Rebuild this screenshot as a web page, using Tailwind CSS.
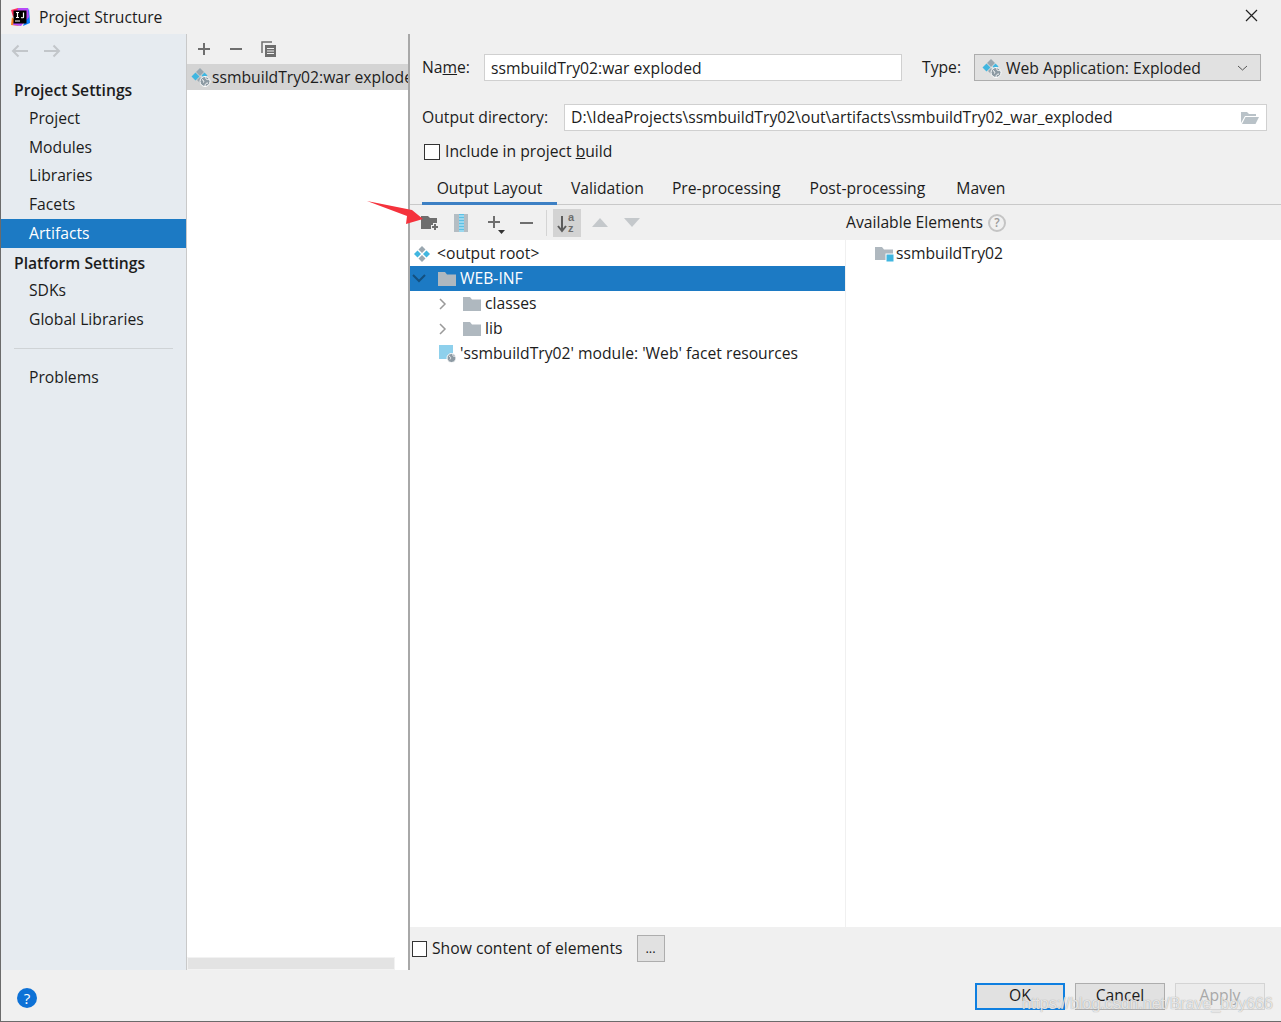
<!DOCTYPE html>
<html lang="en">
<head>
  <meta charset="UTF-8">
  <script src="https://cdn.jsdelivr.net/npm/@tailwindcss/browser@4"></script>
  <title>Project Structure</title>
</head>
<body class="bg-[#f0f0f0] overflow-hidden">
  <!-- Shared icons -->
  <svg class="hidden" xmlns="http://www.w3.org/2000/svg">
    <symbol id="artifact" viewBox="0 0 20 20">
      <path d="M9 1l4 4-4 4-4-4z" fill="#9aa7b0"/>
      <path d="M4.500 5.500l4 4-4 4-4-4z" fill="#40b6e0"/>
      <path d="M13.500 5.500l3 3-3 3-3-3z" fill="#40b6e0"/>
      <path d="M9 10l3 3-3 3-3-3z" fill="#9aa7b0"/>
      <circle cx="14" cy="14.500" r="5" fill="#8d9aa3" stroke="#fff" stroke-width="1"/>
      <path d="M11 12.500c2 1 2 2 1.500 3M15 10c-1 2 1 3 3 2.500M14 19c0-2 1-3 3-3" fill="none" stroke="#fff" stroke-width="1"/>
    </symbol>
    <symbol id="folder" viewBox="0 0 18 14">
      <path d="M0 0h7l2 2.500h9V14H0z" fill="#afb8bf"/>
    </symbol>
  </svg>

  <div class="relative w-[1281px] h-[1022px] flex flex-col border-l border-b border-[#6b6b6b] font-['Open_Sans',sans-serif] text-[15.7px] text-[#1c1c1c]">
    <!-- Title bar -->
    <div class="h-[34px] shrink-0 flex items-center pl-[9px] pr-[23px]">
      <svg class="w-[20px] h-[20px]" viewBox="0 0 20 20">
        <path d="M1 3l7-2 2 3-7 6z" fill="#fe315d"/>
        <path d="M19 1l1 15-7 3z" fill="#087cfa"/>
        <path d="M1 18l1-8 7 9z" fill="#fc801d"/>
        <path d="M8 1h10l1 9-8 9-8-1z" fill="#b74af7"/>
        <rect x="3.500" y="3.500" width="13" height="13" fill="#000"/>
        <rect x="5" y="13.500" width="5" height="1" fill="#fff"/>
        <path d="M6 5.500h3M7.500 5.500v5M6 10.500h3M13.500 5.500v4.500c0 .8-1 1-2.500.5" stroke="#fff" stroke-width="1.200" fill="none"/>
      </svg>
      <span class="ml-[9px] leading-none pt-[2px]">Project Structure</span>
      <svg class="ml-auto w-[13px] h-[13px] mb-[3px]" viewBox="0 0 13 13"><path d="M1 1l11 11M12 1L1 12" stroke="#222" stroke-width="1.200"/></svg>
    </div>

    <!-- Main -->
    <div class="h-[936px] shrink-0 flex">
      <!-- Sidebar -->
      <aside class="w-[186px] shrink-0 bg-[#e6ebf0] border-r border-[#c9c9c9] flex flex-col">
        <div class="h-[42px] shrink-0 flex items-start pt-[10px] pl-[10px] gap-[14px]">
          <svg class="w-[18px] h-[14px]" viewBox="0 0 18 14"><path d="M17 7H2M7.500 1.500L2 7l5.500 5.500" fill="none" stroke="#c2c6ca" stroke-width="2"/></svg>
          <svg class="w-[18px] h-[14px]" viewBox="0 0 18 14"><path d="M1 7h15M10.500 1.500L16 7l-5.500 5.500" fill="none" stroke="#c2c6ca" stroke-width="2"/></svg>
        </div>
        <div class="h-[28.600px] flex items-center pl-[13px] font-semibold">Project Settings</div>
        <div class="h-[28.600px] flex items-center pl-[28px]">Project</div>
        <div class="h-[28.600px] flex items-center pl-[28px]">Modules</div>
        <div class="h-[28.600px] flex items-center pl-[28px]">Libraries</div>
        <div class="h-[28.600px] flex items-center pl-[28px]">Facets</div>
        <div class="h-[28.600px] flex items-center pl-[28px] pt-[2px] bg-[#1c7ac4] text-white">Artifacts</div>
        <div class="h-[28.600px] flex items-center pl-[13px] pt-[4px] font-semibold">Platform Settings</div>
        <div class="h-[28.600px] flex items-center pl-[28px]">SDKs</div>
        <div class="h-[28.600px] flex items-center pl-[28px] pt-[2px]">Global Libraries</div>
        <div class="h-[28.600px] flex items-center px-[13px] pt-[1px]"><div class="w-full h-px bg-[#cfd3d6]"></div></div>
        <div class="h-[28.600px] flex items-center pl-[28px] pt-[4px]">Problems</div>
      </aside>

      <!-- Artifact list -->
      <section class="w-[221px] shrink-0 flex flex-col overflow-hidden">
        <div class="h-[30px] shrink-0 flex items-center pl-[10px] gap-[18px]">
          <svg class="w-[14px] h-[14px]" viewBox="0 0 14 14"><path d="M7 1v12M1 7h12" stroke="#6e6e6e" stroke-width="2"/></svg>
          <svg class="w-[14px] h-[14px]" viewBox="0 0 14 14"><path d="M1 7h12" stroke="#6e6e6e" stroke-width="2"/></svg>
          <svg class="w-[16px] h-[17px]" viewBox="0 0 16 17"><path d="M1 12V1h10" fill="none" stroke="#6e6e6e" stroke-width="1.500"/><rect x="4" y="4" width="11" height="12" fill="#6e6e6e"/><path d="M6 7.500h7M6 10h7M6 12.500h7" stroke="#f0f0f0"/></svg>
        </div>
        <div class="h-[26px] shrink-0 flex items-center bg-[#d4d4d4] pl-[4px] whitespace-nowrap overflow-hidden">
          <svg class="w-[20px] h-[20px] shrink-0"><use href="#artifact"/></svg>
          <span class="ml-[1px] pt-[2px]">ssmbuildTry02:war exploded</span>
        </div>
        <div class="flex-1 bg-white flex flex-col justify-end">
          <div class="h-[13px] w-[208px] bg-[#e3e3e3] border border-[#f2f2f2]"></div>
        </div>
      </section>

      <div class="w-[2px] shrink-0 bg-[#a8a8a8]"></div>

      <!-- Artifact details -->
      <section class="flex-1 flex flex-col min-w-0">
        <div class="h-[141px] shrink-0 flex flex-col pl-[12px]">
          <div class="flex items-center mt-[20px] h-[27px]">
            <span class="w-[62px]">Na<u>m</u>e:</span>
            <div class="w-[418px] h-[27px] bg-white border border-[#d0d0d0] flex items-center pl-[6px] pt-[2px]">ssmbuildTry02:war exploded</div>
            <span class="ml-[20px] w-[52px]">Type:</span>
            <div class="w-[287px] h-[27px] bg-[#e1e1e1] border border-[#adadad] flex items-center pl-[7px] pr-[12px]">
              <svg class="w-[20px] h-[20px] shrink-0"><use href="#artifact"/></svg>
              <span class="ml-[4px] pt-[2px]">Web Application: Exploded</span>
              <svg class="ml-auto w-[11px] h-[6px]" viewBox="0 0 11 6"><path d="M1 1l4.500 4L10 1" fill="none" stroke="#555"/></svg>
            </div>
          </div>
          <div class="flex items-center mt-[23px] h-[27px]">
            <span class="w-[142px]">Output directory:</span>
            <div class="w-[703px] h-[27px] bg-white border border-[#d0d0d0] flex items-center pl-[6px] pr-[7px]">
              <span>D:\IdeaProjects\ssmbuildTry02\out\artifacts\ssmbuildTry02_war_exploded</span>
              <svg class="ml-auto w-[18px] h-[13px]" viewBox="0 0 18 13"><path d="M0 1h6l2 2h7v2H4L0 12z" fill="#b9c2c8"/><path d="M4.500 6H18l-3.500 7H1z" fill="#b9c2c8"/></svg>
            </div>
          </div>
          <div class="flex items-center mt-[9px] ml-[2px]">
            <div class="w-[16px] h-[16px] bg-white border border-[#333]"></div>
            <span class="ml-[5px]">Include in project <u>b</u>uild</span>
          </div>
        </div>

        <!-- Tabs -->
        <div class="h-[30px] shrink-0 flex pl-[12px] border-b border-[#c9c9c9]">
          <div class="relative w-[135px] text-center leading-[26px]">Output Layout<div class="absolute left-0 right-0 bottom-[-1px] h-[3px] bg-[#3d80c4]"></div></div>
          <div class="ml-[14px] leading-[26px]">Validation</div>
          <div class="ml-[28px] leading-[26px]">Pre-processing</div>
          <div class="ml-[29px] leading-[26px]">Post-processing</div>
          <div class="ml-[31px] leading-[26px]">Maven</div>
        </div>

        <!-- Toolbar -->
        <div class="h-[35px] shrink-0 flex items-center">
          <div class="w-[436px] shrink-0 flex items-center pl-[11px]">
            <svg class="w-[18px] h-[16px]" viewBox="0 0 18 16"><path d="M0 1h7l2 2h7v11H0z" fill="#6e6e6e"/><path d="M14 8v8M10 12h8" stroke="#f0f0f0" stroke-width="4"/><path d="M14 9v6M11 12h6" stroke="#6e6e6e" stroke-width="2"/></svg>
            <svg class="ml-[15px] w-[14px] h-[18px]" viewBox="0 0 14 18"><rect x="0" y="0" width="14" height="18" fill="#b4bdc3"/><rect x="5" y="0" width="5" height="18" fill="#5cc1e6"/><path d="M5 2h5M5 5h5M5 8h5M5 11h5M5 14h5M5 17h5" stroke="#d9f0f8" stroke-width="1"/></svg>
            <svg class="ml-[19px] w-[18px] h-[20px] mt-[3px]" viewBox="0 0 18 20"><path d="M7 2v12M1 8h12" stroke="#6e6e6e" stroke-width="2"/><path d="M11 16h7l-3.500 4z" fill="#333"/></svg>
            <svg class="ml-[14px] w-[14px] h-[14px]" viewBox="0 0 14 14"><path d="M1 7h13" stroke="#6e6e6e" stroke-width="2"/></svg>
            <div class="ml-[13px] w-px h-[26px] bg-[#d4d4d4]"></div>
            <div class="ml-[6px] w-[28px] h-[28px] bg-[#d3d3d3] flex items-center justify-center">
              <svg class="w-[20px] h-[22px]" viewBox="0 0 20 22">
                <path d="M5 4v15M1 14l4 5 4-5" fill="none" stroke="#5c5c5c" stroke-width="2"/>
                <text x="11" y="9" font-size="11" font-weight="700" fill="#6e6e6e" font-family="Liberation Sans">a</text>
                <text x="11" y="20" font-size="11" font-weight="700" fill="#6e6e6e" font-family="Liberation Sans">z</text>
              </svg>
            </div>
            <svg class="ml-[11px] w-[16px] h-[9px]" viewBox="0 0 16 9"><path d="M8 0l8 9H0z" fill="#c4c8cb"/></svg>
            <svg class="ml-[16px] w-[16px] h-[9px]" viewBox="0 0 16 9"><path d="M0 0h16L8 9z" fill="#c4c8cb"/></svg>
          </div>
          <span>Available Elements</span>
          <div class="ml-[5px] w-[18px] h-[18px] rounded-full border-2 border-[#c4c4c4] flex items-center justify-center text-[12px] font-semibold text-[#9a9a9a]">?</div>
        </div>

        <!-- Trees -->
        <div class="flex-1 flex bg-white min-h-0">
          <div class="w-[435px] shrink-0 pt-px">
            <div class="h-[25px] flex items-center pl-[3px]">
              <svg class="w-[18px] h-[18px]" viewBox="0 0 18 18"><path d="M9 1l3.500 3.500L9 8 5.500 4.500z" fill="#9aa7b0"/><path d="M4.500 5.500L8 9l-3.500 3.500L1 9z" fill="#40b6e0"/><path d="M13.500 5.500L17 9l-3.500 3.500L10 9z" fill="#40b6e0"/><path d="M9 10l3.500 3.500L9 17l-3.500-3.500z" fill="#9aa7b0"/></svg>
              <span class="ml-[6px]">&lt;output root&gt;</span>
            </div>
            <div class="h-[25px] flex items-center pl-[2px] bg-[#1c7ac4] text-white">
              <svg class="w-[14px] h-[9px]" viewBox="0 0 14 9"><path d="M1 1l6 6 6-6" fill="none" stroke="#14507f" stroke-width="2"/></svg>
              <svg class="ml-[12px] w-[18px] h-[14px]"><use href="#folder"/></svg>
              <span class="ml-[4px]">WEB-INF</span>
            </div>
            <div class="h-[25px] flex items-center pl-[29px]">
              <svg class="w-[8px] h-[12px]" viewBox="0 0 8 12"><path d="M1 1l5 5-5 5" fill="none" stroke="#9a9a9a" stroke-width="1.500"/></svg>
              <svg class="ml-[16px] w-[18px] h-[14px]"><use href="#folder"/></svg>
              <span class="ml-[4px]">classes</span>
            </div>
            <div class="h-[25px] flex items-center pl-[29px]">
              <svg class="w-[8px] h-[12px]" viewBox="0 0 8 12"><path d="M1 1l5 5-5 5" fill="none" stroke="#9a9a9a" stroke-width="1.500"/></svg>
              <svg class="ml-[16px] w-[18px] h-[14px]"><use href="#folder"/></svg>
              <span class="ml-[4px]">lib</span>
            </div>
            <div class="h-[25px] flex items-center pl-[29px]">
              <svg class="w-[18px] h-[18px]" viewBox="0 0 18 18"><rect x="0" y="0" width="14" height="14" fill="#8ed0ec"/><circle cx="12.500" cy="13" r="4.500" fill="#8d9aa3" stroke="#fff"/><path d="M10 11c2 1 2 2 1 3.500M14 9c-1 2 1 3 3 2" fill="none" stroke="#fff" stroke-width=".8"/></svg>
              <span class="ml-[3px]">'ssmbuildTry02' module: 'Web' facet resources</span>
            </div>
          </div>
          <div class="w-px shrink-0 bg-[#f0f0f0]"></div>
          <div class="flex-1 pt-px">
            <div class="h-[25px] flex items-center pl-[29px]">
              <svg class="w-[20px] h-[18px]" viewBox="0 0 20 18"><path d="M0 2h7l2 2.500h9V15H0z" fill="#afb8bf"/><rect x="11" y="9" width="8" height="8" fill="#40b6e0" stroke="#fff"/></svg>
              <span class="ml-[1px]">ssmbuildTry02</span>
            </div>
          </div>
        </div>

        <!-- Show content -->
        <div class="h-[43px] shrink-0 flex items-center pl-[2px]">
          <div class="w-[15px] h-[16px] bg-white border border-[#333]"></div>
          <span class="ml-[5px]">Show content of elements</span>
          <div class="ml-[14px] w-[28px] h-[27px] bg-[#e1e1e1] border border-[#adadad] flex items-center justify-center text-[13px]">...</div>
        </div>
      </section>
    </div>

    <!-- Footer -->
    <div class="flex-1 flex items-center pl-[16px] pr-[16px] pt-px">
      <div class="mt-[4px] w-[20px] h-[20px] rounded-full bg-[#0d71d6] text-white text-[15px] flex items-center justify-center">?</div>
      <div class="ml-auto w-[90px] h-[27px] bg-[#e1e1e1] border-2 border-[#0f7fe0] flex items-center justify-center">OK</div>
      <div class="ml-[10px] w-[90px] h-[27px] bg-[#e1e1e1] border border-[#adadad] flex items-center justify-center">Cancel</div>
      <div class="ml-[10px] w-[90px] h-[27px] bg-[#ececec] border border-[#d4d4d4] flex items-center justify-center text-[#a8a8a8]">Apply</div>
    </div>

    <!-- Annotation arrow pasted over the toolbar -->
    <svg class="absolute left-[364px] top-[199px] w-[60px] h-[28px]" viewBox="364 199 60 28"><path d="M366 201l45 9 11 9-17 5 1-8z" fill="#f5323c"/></svg>
    <!-- Watermark -->
    <span class="absolute left-[1021px] top-[992px] font-['Liberation_Sans',sans-serif] text-[16px] text-white/75 [text-shadow:0_0_1px_#8a8a8a] whitespace-nowrap">https://blog.csdn.net/Brave_boy666</span>
  </div>
</body>
</html>
